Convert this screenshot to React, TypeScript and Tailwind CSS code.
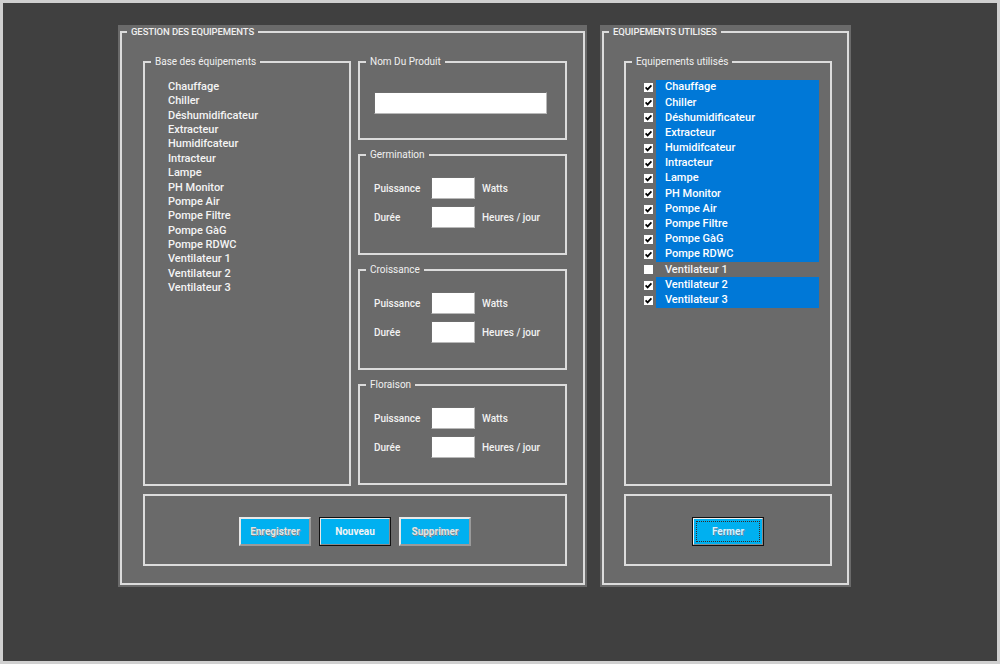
import React from 'react';

const BASE = [
  'Chauffage',
  'Chiller',
  'Déshumidificateur',
  'Extracteur',
  'Humidifcateur',
  'Intracteur',
  'Lampe',
  'PH Monitor',
  'Pompe Air',
  'Pompe Filtre',
  'Pompe GàG',
  'Pompe RDWC',
  'Ventilateur 1',
  'Ventilateur 2',
  'Ventilateur 3',
];

const UNCHECKED = ['Ventilateur 1'];

// group box (VBA frame look): fieldset + legend, padding lives on the inner body
function Group({
  title,
  className = '',
  bodyClass = '',
  legendClass = 'ml-[6px] text-[10px]',
  children,
}: {
  title?: string;
  className?: string;
  bodyClass?: string;
  legendClass?: string;
  children?: React.ReactNode;
}) {
  return (
    <fieldset className={`border-2 border-[#dcdcdc] min-w-0 flex flex-col ${className}`}>
      {title && (
        <legend className={`${legendClass} px-[4px] leading-[14px] text-[#f0f0f0]`}>{title}</legend>
      )}
      <div className={`flex-1 ${bodyClass}`}>{children}</div>
    </fieldset>
  );
}

function Field({ className = '' }: { className?: string }) {
  return (
    <div
      className={`bg-white border border-[#b8b8b8] border-t-[#6e6e6e] border-l-[#6e6e6e] ${className}`}
    />
  );
}

function PhaseBox({ title }: { title: string }) {
  return (
    <Group title={title} className="h-[107px]" bodyClass="pl-[14px] pt-[15px]">
      <div className="flex flex-col gap-[7px] text-[10px] font-medium text-[#f2f2f2]">
        <div className="flex items-center h-[22px]">
          <span className="w-[57px]">Puissance</span>
          <Field className="w-[44px] h-[22px]" />
          <span className="ml-[7px]">Watts</span>
        </div>
        <div className="flex items-center h-[22px]">
          <span className="w-[57px]">Durée</span>
          <Field className="w-[44px] h-[22px]" />
          <span className="ml-[7px]">Heures / jour</span>
        </div>
      </div>
    </Group>
  );
}

function Check({ checked }: { checked: boolean }) {
  return (
    <svg width="9" height="9" viewBox="0 0 9 9" className="shrink-0">
      <rect x="0" y="0" width="9" height="9" fill="#ffffff" />
      {checked && (
        <path d="M1.6 4.4 L3.6 6.4 L7.4 2.3" fill="none" stroke="#000000" strokeWidth="1.7" />
      )}
    </svg>
  );
}

function WinButton({
  label,
  variant,
}: {
  label: string;
  variant: 'dim' | 'default' | 'focus';
}) {
  if (variant === 'dim') {
    return (
      <div className="w-[72px] h-[29px] bg-[#00b0f0] border-2 border-[#e8e8e8] border-r-[#9a9a9a] border-b-[#9a9a9a] flex items-center justify-center text-[10px] font-bold text-[#e4e4e4] [text-shadow:1px_1px_0_#7c8a92]">
        {label}
      </div>
    );
  }
  if (variant === 'default') {
    return (
      <div className="w-[72px] h-[29px] border border-[#111111]">
        <div className="w-full h-full bg-[#00b0f0] border border-[#e8e8e8] border-r-[#8a8a8a] border-b-[#8a8a8a] flex items-center justify-center text-[10px] font-bold text-[#f4f4f4]">
          {label}
        </div>
      </div>
    );
  }
  return (
    <div className="w-[72px] h-[29px] border border-[#111111]">
      <div className="w-full h-full bg-[#00b0f0] border border-[#f0f0f0] border-r-[#8a8a8a] border-b-[#8a8a8a] p-[2px]">
        <div className="w-full h-full border border-dotted border-[#3a2a20] flex items-center justify-center text-[10px] font-bold text-[#d8f2ff] [text-shadow:1px_1px_0_#5a8aa8]">
          {label}
        </div>
      </div>
    </div>
  );
}

export default function App() {
  return (
    <div
      className="w-[1000px] h-[664px] bg-[#404040] border-[3px] border-[#d0d0d0] pl-[115px] pt-[22px] flex gap-[13px] items-start"
      style={{ fontFamily: 'Roboto, "Liberation Sans", sans-serif' }}
    >
      {/* left panel */}
      <div className="w-[469px] h-[562px] bg-[#6a6a6a] px-[2px] pb-[2px] flex">
        <Group
          title="GESTION DES EQUIPEMENTS"
          legendClass="ml-[5px] text-[9.5px] font-medium tracking-[-0.1px]"
          className="flex-1"
          bodyClass="pl-[21px] pt-[16px]"
        >
          <div className="flex gap-[7px]">
            <Group
              title="Base des équipements"
              className="w-[208px] h-[431px]"
              bodyClass="pl-[23px] pt-[11px]"
            >
              <ul className="text-[11px] font-medium leading-[14.36px] text-[#f4f4f4]">
                {BASE.map((b) => (
                  <li key={b}>{b}</li>
                ))}
              </ul>
            </Group>
            <div className="w-[209px] flex flex-col gap-[8px]">
              <Group title="Nom Du Produit" className="h-[85px]" bodyClass="pl-[14px] pt-[23px]">
                <Field className="w-[173px] h-[22px]" />
              </Group>
              <PhaseBox title="Germination" />
              <PhaseBox title="Croissance" />
              <PhaseBox title="Floraison" />
            </div>
          </div>
          <Group
            className="mt-[8px] w-[424px] h-[72px]"
            bodyClass="flex items-center justify-center gap-[8px] pt-[2px]"
          >
            <WinButton label="Enregistrer" variant="dim" />
            <WinButton label="Nouveau" variant="default" />
            <WinButton label="Supprimer" variant="dim" />
          </Group>
        </Group>
      </div>

      {/* right panel */}
      <div className="w-[251px] h-[562px] bg-[#6a6a6a] px-[2px] pb-[2px] flex">
        <Group
          title="EQUIPEMENTS UTILISES"
          legendClass="ml-[5px] text-[9.5px] font-medium tracking-[-0.1px]"
          className="flex-1"
          bodyClass="pl-[20px] pt-[16px]"
        >
          <Group
            title="Equipements utilisés"
            className="w-[208px] h-[431px]"
            bodyClass="pl-[18px] pt-[11px]"
          >
            <div className="flex flex-col text-[11px] font-medium text-[#f4f4f4]">
              {BASE.map((b) => {
                const on = !UNCHECKED.includes(b);
                return (
                  <div key={b} className="flex items-center h-[15.2px]">
                    <Check checked={on} />
                    <div
                      className={`ml-[3px] w-[163px] h-full pl-[9px] flex items-center ${
                        on ? 'bg-[#0078d7] text-white' : ''
                      }`}
                    >
                      {b}
                    </div>
                  </div>
                );
              })}
            </div>
          </Group>
          <Group
            className="mt-[8px] w-[208px] h-[72px]"
            bodyClass="flex items-center justify-center pt-[2px]"
          >
            <WinButton label="Fermer" variant="focus" />
          </Group>
        </Group>
      </div>
    </div>
  );
}
